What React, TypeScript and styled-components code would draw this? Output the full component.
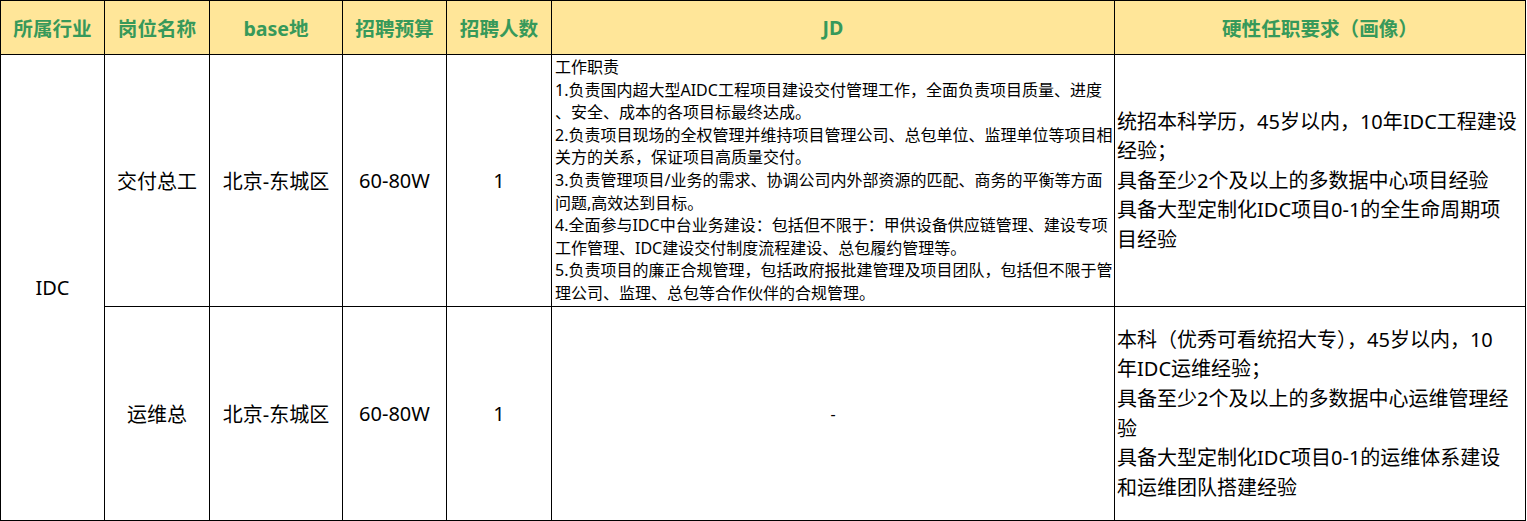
import React from 'react'
import styled, { createGlobalStyle } from 'styled-components'

const GlobalStyle = createGlobalStyle`
  html, body {
    margin: 0;
    padding: 0;
    background: #fff;
  }
  body {
    font-family: 'Noto Sans', 'Noto Sans CJK SC', sans-serif;
    color: #000;
  }
`

const headers = ['所属行业', '岗位名称', 'base地', '招聘预算', '招聘人数', 'JD', '硬性任职要求（画像）']

const jobs = [
  {
    title: '交付总工',
    city: '北京-东城区',
    budget: '60-80W',
    count: '1',
    jd: [
      '工作职责',
      '1.负责国内超大型AIDC工程项目建设交付管理工作，全面负责项目质量、进度',
      '、安全、成本的各项目标最终达成。',
      '2.负责项目现场的全权管理并维持项目管理公司、总包单位、监理单位等项目相',
      '关方的关系，保证项目高质量交付。',
      '3.负责管理项目/业务的需求、协调公司内外部资源的匹配、商务的平衡等方面',
      '问题,高效达到目标。',
      '4.全面参与IDC中台业务建设：包括但不限于：甲供设备供应链管理、建设专项',
      '工作管理、IDC建设交付制度流程建设、总包履约管理等。',
      '5.负责项目的廉正合规管理，包括政府报批建管理及项目团队，包括但不限于管',
      '理公司、监理、总包等合作伙伴的合规管理。',
    ],
    reqs: [
      '统招本科学历，45岁以内，10年IDC工程建设',
      '经验；',
      '具备至少2个及以上的多数据中心项目经验',
      '具备大型定制化IDC项目0-1的全生命周期项',
      '目经验',
    ],
  },
  {
    title: '运维总',
    city: '北京-东城区',
    budget: '60-80W',
    count: '1',
    jd: null,
    reqs: [
      '本科（优秀可看统招大专），45岁以内，10',
      '年IDC运维经验；',
      '具备至少2个及以上的多数据中心运维管理经',
      '验',
      '具备大型定制化IDC项目0-1的运维体系建设',
      '和运维团队搭建经验',
    ],
  },
]

export default function App() {
  return (
    <>
      <GlobalStyle />
      <Sheet>
        {headers.map(h => (
          <HeaderCell key={h}>{h}</HeaderCell>
        ))}
        <Cell $rows={2}>IDC</Cell>
        {jobs.map(job => (
          <React.Fragment key={job.title}>
            <Cell>{job.title}</Cell>
            <Cell>{job.city}</Cell>
            <Cell>{job.budget}</Cell>
            <Cell>{job.count}</Cell>
            {job.jd ? (
              <JdCell>
                {job.jd.map((line, i) => <Line key={i}>{line}</Line>)}
              </JdCell>
            ) : (
              <Cell $small>-</Cell>
            )}
            <ReqCell>
              {job.reqs.map((line, i) => <Line key={i}>{line}</Line>)}
            </ReqCell>
          </React.Fragment>
        ))}
      </Sheet>
    </>
  )
}

const Sheet = styled.div`
  display: grid;
  grid-template-columns: 103px 104px 132px 103px 104px 562px 410px;
  grid-template-rows: 53px 251px 213px;
  gap: 1px;
  width: max-content;
  background: #000;
  border: 1px solid #000;
`

const HeaderCell = styled.div`
  display: flex;
  align-items: center;
  justify-content: center;
  background: #ffe699;
  color: #37995a;
  font-weight: 700;
  font-size: 19.6px;
  white-space: nowrap;
`

const Cell = styled.div<{ $rows?: number; $small?: boolean }>`
  display: flex;
  align-items: center;
  justify-content: center;
  background: #fff;
  font-size: ${({ $small }) => ($small ? '16px' : '20px')};
  white-space: nowrap;
  ${({ $rows }) => $rows && `grid-row: span ${$rows};`}
`

const JdCell = styled.div`
  background: #fff;
  padding: 1px 0 0 3px;
  font-size: 16px;
  line-height: 22.6px;
  overflow: hidden;
`

const ReqCell = styled.div`
  display: flex;
  flex-direction: column;
  justify-content: center;
  background: #fff;
  padding-left: 2px;
  font-size: 20px;
  line-height: 29.6px;
`

const Line = styled.div`
  white-space: nowrap;
`
